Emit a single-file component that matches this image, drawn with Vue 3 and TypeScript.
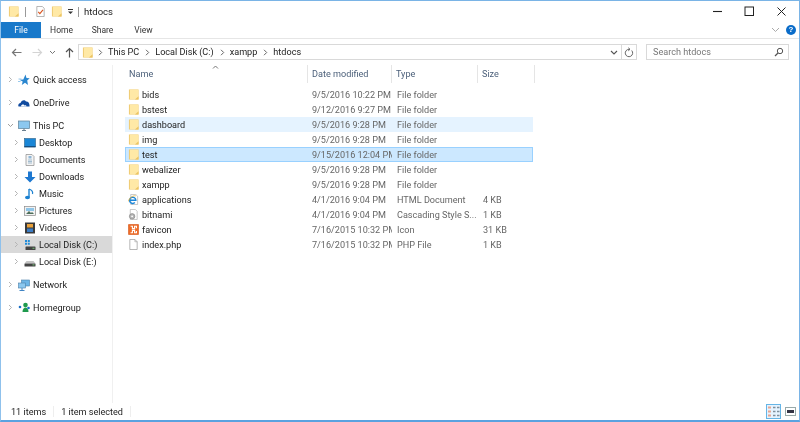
<script setup lang="ts">
interface FileRow { name: string; icon: string; date: string; type: string; size: string; state?: string }
interface NavRow { label: string; icon: string; child?: boolean; open?: boolean; selected?: boolean; gap?: boolean }

const files: FileRow[] = [
  { name: 'bids', icon: 'folder', date: '9/5/2016 10:22 PM', type: 'File folder', size: '' },
  { name: 'bstest', icon: 'folder', date: '9/12/2016 9:27 PM', type: 'File folder', size: '' },
  { name: 'dashboard', icon: 'folder', date: '9/5/2016 9:28 PM', type: 'File folder', size: '', state: 'hover' },
  { name: 'img', icon: 'folder', date: '9/5/2016 9:28 PM', type: 'File folder', size: '' },
  { name: 'test', icon: 'folder', date: '9/15/2016 12:04 PM', type: 'File folder', size: '', state: 'selected' },
  { name: 'webalizer', icon: 'folder', date: '9/5/2016 9:28 PM', type: 'File folder', size: '' },
  { name: 'xampp', icon: 'folder', date: '9/5/2016 9:28 PM', type: 'File folder', size: '' },
  { name: 'applications', icon: 'html', date: '4/1/2016 9:04 PM', type: 'HTML Document', size: '4 KB' },
  { name: 'bitnami', icon: 'css', date: '4/1/2016 9:04 PM', type: 'Cascading Style S...', size: '1 KB' },
  { name: 'favicon', icon: 'xampp', date: '7/16/2015 10:32 PM', type: 'Icon', size: '31 KB' },
  { name: 'index.php', icon: 'page', date: '7/16/2015 10:32 PM', type: 'PHP File', size: '1 KB' },
]

const nav: NavRow[] = [
  { label: 'Quick access', icon: 'star' },
  { label: 'OneDrive', icon: 'cloud', gap: true },
  { label: 'This PC', icon: 'pc', open: true, gap: true },
  { label: 'Desktop', icon: 'desktop', child: true },
  { label: 'Documents', icon: 'docs', child: true },
  { label: 'Downloads', icon: 'down', child: true },
  { label: 'Music', icon: 'music', child: true },
  { label: 'Pictures', icon: 'pics', child: true },
  { label: 'Videos', icon: 'video', child: true },
  { label: 'Local Disk (C:)', icon: 'diskc', child: true, selected: true },
  { label: 'Local Disk (E:)', icon: 'disk', child: true },
  { label: 'Network', icon: 'net', gap: true },
  { label: 'Homegroup', icon: 'home', gap: true },
]

const crumbs = ['This PC', 'Local Disk (C:)', 'xampp', 'htdocs']
</script>

<template>
  <div class="window">
    <svg class="defs" width="0" height="0" aria-hidden="true">
      <symbol id="folder" viewBox="0 0 12 12">
        <path d="M1 .5h10.500v11H1z" fill="#f0cd77" />
        <path d="M2.200 .8h9v10.400H2.200z" fill="#ffe9a6" />
        <path d="M7.500 11.500l4-3.500v3.500z" fill="#ecc463" />
      </symbol>
      <symbol id="html" viewBox="0 0 12 12">
        <path d="M3 .5h5.500l2 2v9h-7.500z" fill="#fff" stroke="#aaa" stroke-width=".7" />
        <path d="M1.800 6.700h6.700a3.400 3.400 0 1 0-1 2.600" fill="none" stroke="#1c86d8" stroke-width="1.600" />
        <path d="M.5 8C1 4.500 5 1.500 8.500 2" fill="none" stroke="#e9b23a" stroke-width=".9" />
      </symbol>
      <symbol id="css" viewBox="0 0 12 12">
        <path d="M2.500.5h5.500l2 2v9h-7.500z" fill="#fff" stroke="#aaa" stroke-width=".7" />
        <circle cx="4.500" cy="8" r="3" fill="#b4b4b4" stroke="#777" stroke-width=".6" />
        <circle cx="4.500" cy="8" r="1" fill="#fff" />
      </symbol>
      <symbol id="xampp" viewBox="0 0 12 12">
        <rect x="0.300" y="0.300" width="11.400" height="11.400" rx="1" fill="#ee6c28" stroke="#c7521b" stroke-width=".5" />
        <path d="M2.800 2.500h2v2.500h2.400v-2.500h2v2M2.800 9.500h2V7h2.400v2.500h2v-2" fill="none" stroke="#fff" stroke-width="1.200" />
      </symbol>
      <symbol id="page" viewBox="0 0 12 12">
        <path d="M2 .5h5.500l2.500 2.500v8.500h-8z" fill="#fff" stroke="#999" stroke-width=".8" />
        <path d="M7.500.5v2.500h2.500" fill="none" stroke="#999" stroke-width=".6" />
      </symbol>
      <symbol id="star" viewBox="0 0 12 12">
        <path d="M7.500.5l1 3.500 3.200.3-2.500 2.200.8 4.500-3-2.300-3.200 2.300.9-3.500-3.200-1.700 3.800-.2z" fill="#2a86cf" />
        <path d="M.5 5h3M0 7.500h2.500" stroke="#7dbbe8" stroke-width=".8" />
      </symbol>
      <symbol id="cloud" viewBox="0 0 12 12">
        <path d="M.5 9.500c-.8-2 .6-3.500 2-3.500C3.200 3.500 6.500 2 8 4.500c2-.3 3.800 1.500 3.500 5z" fill="#0f4a9f" />
        <path d="M3 9.500c0-1.500 1-2 2-2s1 .5 1.500 1c1-.5 2 0 2 1z" fill="#fff" />
      </symbol>
      <symbol id="pc" viewBox="0 0 12 12">
        <rect x=".5" y="1" width="11" height="7.500" fill="#8cc8ef" stroke="#5b7f97" stroke-width=".7" />
        <path d="M4 10.500h4M6 8.500v2" stroke="#6b7f8e" stroke-width="1.100" />
      </symbol>
      <symbol id="desktop" viewBox="0 0 12 12">
        <rect x=".5" y="1.500" width="11" height="8.500" fill="#1a86d6" stroke="#2a5f86" stroke-width=".6" />
        <rect x=".5" y="9" width="11" height="1.200" fill="#174f80" />
      </symbol>
      <symbol id="docs" viewBox="0 0 12 12">
        <path d="M2 .5h6l2 2v9h-8z" fill="#f4f4f4" stroke="#8b8b8b" stroke-width=".7" />
        <rect x="4.500" y="2" width="3" height="2.500" fill="#8fb6d6" />
        <path d="M4 6h4M4 7.500h4M4 9h4" stroke="#7fa3bf" stroke-width=".7" />
      </symbol>
      <symbol id="down" viewBox="0 0 12 12">
        <path d="M4 .5h4v5.500h3.500L6 11.500.5 6H4z" fill="#1e78d0" />
      </symbol>
      <symbol id="music" viewBox="0 0 12 12">
        <path d="M5 1v8" stroke="#1b80d0" stroke-width="1.400" />
        <ellipse cx="3.500" cy="9.500" rx="2.500" ry="1.800" fill="#1b80d0" />
        <path d="M5 1c3 1 4 3 3.500 5" fill="none" stroke="#1b80d0" stroke-width="1.200" />
      </symbol>
      <symbol id="pics" viewBox="0 0 12 12">
        <rect x=".5" y="1.500" width="11" height="9" fill="#f2f2f2" stroke="#8b8b8b" stroke-width=".7" />
        <rect x="2" y="3" width="8" height="3" fill="#8fc5e8" />
        <path d="M2 9l3-3 2 2 1-1 2 2z" fill="#4e6e5a" />
      </symbol>
      <symbol id="video" viewBox="0 0 12 12">
        <rect x="1" y=".5" width="10" height="11" fill="#3a3a3a" />
        <rect x="3" y="2" width="6" height="3.500" fill="#e9a13b" />
        <rect x="3" y="6.500" width="6" height="3.500" fill="#3b7cc4" />
      </symbol>
      <symbol id="diskc" viewBox="0 0 12 12">
        <rect x="1.500" y="7.500" width="10" height="3.500" rx=".6" fill="#444" />
        <rect x="8.500" y="8.800" width="2" height=".8" fill="#7fe07f" />
        <path d="M1 1h2v2H1zM3.800 1h2v2h-2zM1 3.800h2v2H1zM3.800 3.800h2v2h-2z" fill="#1f8bd8" />
      </symbol>
      <symbol id="disk" viewBox="0 0 12 12">
        <path d="M2.500 5h7l2 2.500h-11z" fill="#c4c4c4" />
        <rect x=".5" y="7.500" width="11" height="3" rx=".5" fill="#444" />
        <rect x="8.500" y="8.500" width="2" height=".8" fill="#7fe07f" />
      </symbol>
      <symbol id="net" viewBox="0 0 12 12">
        <rect x="3.500" y="1" width="8" height="6" fill="#6db5e6" stroke="#4a7fa8" stroke-width=".6" />
        <rect x=".5" y="4" width="7" height="5" fill="#8cc8ef" stroke="#4a7fa8" stroke-width=".6" />
        <path d="M4 9v2.500M1.500 11.500h5" stroke="#2f78bd" stroke-width=".9" />
      </symbol>
      <symbol id="home" viewBox="0 0 12 12">
        <circle cx="7.500" cy="3" r="2.300" fill="#1f9a4d" />
        <path d="M4.500 10c0-3 1.500-4.500 3-4.500s3 1.500 3 4.500z" fill="#1f9a4d" />
        <circle cx="2" cy="5" r="1.300" fill="#1a6fc4" />
        <circle cx="10.500" cy="6" r="1.300" fill="#1a6fc4" />
      </symbol>
      <symbol id="checkdoc" viewBox="0 0 12 12">
        <path d="M2 .5h6l2 2v9H2z" fill="#fff" stroke="#8b8b8b" stroke-width=".7" />
        <path d="M3.500 6.500l1.800 1.800 3.400-4" fill="none" stroke="#d9531e" stroke-width="1.200" />
      </symbol>
    </svg>

    <div class="titlebar">
      <div class="qat">
        <svg class="ico" viewBox="0 0 12 12"><use href="#folder" /></svg>
        <span class="bar"></span>
        <svg class="ico check" viewBox="0 0 12 12"><use href="#checkdoc" /></svg>
        <svg class="ico" viewBox="0 0 12 12"><use href="#folder" /></svg>
        <svg class="qat-drop" width="7" height="7" viewBox="0 0 7 7"><path d="M1 1.500h5" stroke="#333" /><path d="M1 3.500h5L3.500 6z" fill="#333" /></svg>
        <span class="bar end"></span>
        <span class="win-title">htdocs</span>
      </div>
      <div class="controls">
        <svg width="11" height="11" viewBox="0 0 11 11"><path d="M1 5.500h9" stroke="#222" stroke-width="1.100" /></svg>
        <svg width="11" height="11" viewBox="0 0 11 11"><rect x="1" y="1" width="8.500" height="8.500" fill="none" stroke="#222" /></svg>
        <svg width="11" height="11" viewBox="0 0 11 11"><path d="M1.500 1.500l8 8M9.500 1.500l-8 8" stroke="#222" /></svg>
      </div>
    </div>

    <div class="ribbon">
      <span class="tab file">File</span>
      <span class="tab">Home</span>
      <span class="tab">Share</span>
      <span class="tab">View</span>
      <span class="spacer"></span>
      <svg width="9" height="6" viewBox="0 0 9 6"><path d="M1 1l3.500 3.500L8 1" fill="none" stroke="#aaa" /></svg>
      <span class="help">?</span>
    </div>

    <div class="navbar">
      <div class="nav-buttons">
        <svg width="11" height="9" viewBox="0 0 11 9"><path d="M10.500 4.500H1.500M5 1L1.500 4.500 5 8" fill="none" stroke="#777" stroke-width="1.200" /></svg>
        <svg class="fwd" width="11" height="9" viewBox="0 0 11 9"><path d="M.5 4.500h9M6 1l3.500 3.500L6 8" fill="none" stroke="#d4d4d4" stroke-width="1.200" /></svg>
        <svg class="recent" width="7" height="5" viewBox="0 0 7 5"><path d="M1 1l2.500 2.500L6 1" fill="none" stroke="#777" /></svg>
        <svg class="up" width="9" height="11" viewBox="0 0 9 11"><path d="M4.500 10.500v-9M1 5l3.500-3.500L8 5" fill="none" stroke="#555" stroke-width="1.200" /></svg>
      </div>
      <div class="address">
        <svg class="ico" viewBox="0 0 12 12"><use href="#folder" /></svg>
        <template v-for="c in crumbs" :key="c">
          <svg class="crumb-sep" width="5" height="7" viewBox="0 0 5 7"><path d="M1 .8l2.700 2.700L1 6.200" fill="none" stroke="#666" /></svg>
          <span class="crumb">{{ c }}</span>
        </template>
        <span class="spacer"></span>
        <svg width="8" height="5" viewBox="0 0 8 5"><path d="M1 1l3 3 3-3" fill="none" stroke="#555" stroke-width="1.100" /></svg>
        <span class="refresh">
          <svg width="10" height="11" viewBox="0 0 10 11"><path d="M7.700 3.500a3.700 3.700 0 1 1-2.700-1.200H6M4.300.8L6 2.300 4.300 3.800" fill="none" stroke="#666" /></svg>
        </span>
      </div>
      <div class="search">
        <span>Search htdocs</span>
        <svg width="10" height="10" viewBox="0 0 10 10"><circle cx="6" cy="4" r="2.700" fill="none" stroke="#555" /><path d="M4 6L1 9" stroke="#555" stroke-width="1.300" /></svg>
      </div>
    </div>

    <div class="main">
      <aside class="tree">
        <div
          v-for="n in nav"
          :key="n.label"
          class="tree-row"
          :class="{ child: n.child, selected: n.selected, gap: n.gap }"
        >
          <svg class="twisty" width="7" height="7" viewBox="0 0 7 7">
            <path v-if="n.open" d="M1 2l2.500 2.500L6 2" fill="none" stroke="#a0a0a0" />
            <path v-else d="M2 1l2.500 2.500L2 6" fill="none" stroke="#b4b4b4" />
          </svg>
          <svg class="ico" viewBox="0 0 12 12"><use :href="'#' + n.icon" /></svg>
          <span>{{ n.label }}</span>
        </div>
      </aside>

      <section class="content">
        <svg class="sort" width="7" height="4" viewBox="0 0 7 4"><path d="M1 3.500L3.500 1 6 3.500" fill="none" stroke="#777" /></svg>
        <div class="list">
          <div class="grid head">
            <span>Name</span>
            <span>Date modified</span>
            <span>Type</span>
            <span>Size</span>
          </div>
          <div class="rows">
            <div v-for="f in files" :key="f.name" class="grid row" :class="f.state">
              <span class="name">
                <svg class="ico" viewBox="0 0 12 12"><use :href="'#' + f.icon" /></svg>
                <b>{{ f.name }}</b>
              </span>
              <span class="dim">{{ f.date }}</span>
              <span class="dim">{{ f.type }}</span>
              <span class="dim size">{{ f.size }}</span>
            </div>
          </div>
        </div>
      </section>
    </div>

    <footer class="status">
      <span>11 items</span>
      <span class="status-sep"></span>
      <span>1 item selected</span>
      <span class="status-sep"></span>
      <span class="spacer"></span>
      <span class="view active">
        <svg width="13" height="11" viewBox="0 0 13 11">
          <path d="M1 1.500h3M1 5.500h3M1 9.500h3" stroke="#e9a58f" stroke-width="2" />
          <path d="M6 1.500h2.500M10 1.500h2.500M6 5.500h2.500M10 5.500h2.500M6 9.500h2.500M10 9.500h2.500" stroke="#7f8f9c" stroke-width="1.400" />
        </svg>
      </span>
      <span class="view">
        <svg width="11" height="9" viewBox="0 0 11 9">
          <rect x=".5" y=".5" width="10" height="8" fill="#fff" stroke="#9aa" />
          <rect x="2" y="3" width="7" height="3" fill="#334" />
        </svg>
      </span>
    </footer>
  </div>
</template>

<style>
html, body { margin: 0; background: #fff; }
</style>

<style scoped>
.window {
  width: 800px;
  height: 422px;
  box-sizing: border-box;
  border-top: 1px solid #7ab4e6;
  border-left: 1px solid #8fc1ec;
  border-right: 1px solid #7ab4e6;
  border-bottom: 2px solid #5aa2e0;
  display: flex;
  flex-direction: column;
  overflow: hidden;
  background: #fff;
  font-family: Roboto, "Noto Sans", sans-serif;
  font-size: 9.1px;
  color: #222;
  filter: blur(0.25px);
}
.defs { position: absolute; }
.ico { width: 11px; height: 11px; flex: none; }
.spacer { flex: 1; }

.titlebar {
  height: 21px;
  display: flex;
  align-items: center;
  justify-content: space-between;
  padding: 0 12px 0 7px;
}
.qat { display: flex; align-items: center; }
.bar { width: 1px; height: 10px; background: #999; margin: 0 9px 0 6px; }
.bar.end { margin: 0 5px 0 4px; }
.check { margin-right: 5px; }
.qat-drop { margin-left: 5px; }
.win-title { font-size: 9.5px; }
.controls { display: flex; gap: 21px; }

.ribbon {
  height: 16px;
  display: flex;
  align-items: center;
  padding-right: 3px;
  gap: 4px;
}
.tab { width: 37px; text-align: center; color: #333; font-size: 8.5px; }
.tab.file {
  width: 40px;
  height: 16px;
  line-height: 16px;
  margin-right: -2px;
  background: #1979ca;
  color: #fff;
}
.help {
  width: 10px;
  height: 10px;
  margin-left: 2px;
  border-radius: 50%;
  background: #0a6cc9;
  color: #fff;
  font: 700 8px/10px "Liberation Sans", sans-serif;
  text-align: center;
}

.navbar {
  height: 27px;
  box-sizing: border-box;
  border-top: 1px solid #e6e6e6;
  display: flex;
  align-items: center;
  padding: 0 9px 0 10px;
}
.nav-buttons { width: 67px; flex: none; display: flex; align-items: center; }
.fwd { margin-left: 10px; }
.recent { margin-left: 6px; }
.up { margin-left: 9px; }
.address, .search {
  height: 16px;
  box-sizing: border-box;
  border: 1px solid #d9d9d9;
  display: flex;
  align-items: center;
  background: #fff;
}
.address { width: 559px; padding-left: 3px; color: #222; }
.crumb-sep { margin: 0 5px 0 5px; }
.crumb { margin-right: 1px; }
.refresh {
  margin-left: 3px;
  height: 14px;
  width: 14px;
  border-left: 1px solid #d9d9d9;
  display: flex;
  align-items: center;
  justify-content: center;
}
.search {
  width: 143px;
  margin-left: 9px;
  padding: 0 4px 0 6px;
  justify-content: space-between;
  color: #777;
}

.main { flex: 1; display: flex; min-height: 0; }
.tree {
  width: 112px;
  flex: none;
  box-sizing: border-box;
  padding-top: 6px;
  border-right: 1px solid #f0f0f0;
}
.tree-row {
  height: 17px;
  display: flex;
  align-items: center;
  padding-left: 6px;
  color: #222;
}
.tree-row.gap { margin-top: 6px; }
.tree-row.child { padding-left: 12px; }
.tree-row.selected { background: #d9d9d9; }
.twisty { margin-right: 4px; flex: none; }
.tree-row .ico { width: 12px; height: 12px; margin-right: 3px; }

.content { flex: 1; position: relative; padding-left: 12px; }
.sort { position: absolute; left: 99px; top: 0; }
.list { width: 410px; }
.grid { display: grid; grid-template-columns: 183px 84px 86px 57px; }
.head { height: 18px; align-items: center; color: #4c607a; }
.head span { padding-left: 4px; border-right: 1px solid #e5e5e5; height: 100%; display: flex; align-items: center; }
.rows { margin-top: 4px; width: 408px; }
.row { height: 15px; box-sizing: border-box; align-items: center; }
.row.hover { background: #e5f3ff; }
.row.selected { background: #cce8ff; outline: 1px solid #99d1ff; outline-offset: -1px; }
.name { display: flex; align-items: center; padding-left: 3px; }
.name .ico { margin-right: 3px; }
.name b { font-weight: 400; }
.dim { color: #666; padding-left: 5px; white-space: nowrap; overflow: hidden; }
.dim:nth-child(2) { padding-left: 4px; }
.size { text-align: right; padding-right: 37px; }

.status {
  height: 17px;
  display: flex;
  align-items: center;
  padding-left: 10px;
  color: #222;
}
.status-sep { width: 1px; height: 11px; background: #eee; margin: 0 7px; }
.view {
  width: 15px;
  height: 15px;
  box-sizing: border-box;
  display: flex;
  align-items: center;
  justify-content: center;
  margin-right: 1px;
}
.view.active { background: #e5f3ff; border: 1px solid #66b5e6; margin-right: 2px; }
</style>
